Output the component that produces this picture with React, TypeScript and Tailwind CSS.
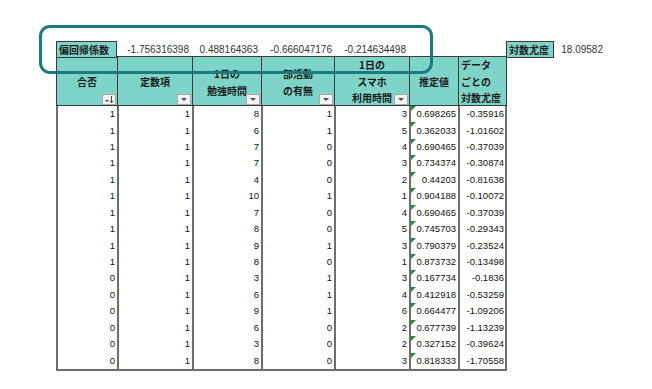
import React from "react";

const rows: [number, number, number, number, number, string, string][] = [
  [1, 1, 8, 1, 3, "0.698265", "-0.35916"],
  [1, 1, 6, 1, 5, "0.362033", "-1.01602"],
  [1, 1, 7, 0, 4, "0.690465", "-0.37039"],
  [1, 1, 7, 0, 3, "0.734374", "-0.30874"],
  [1, 1, 4, 0, 2, "0.44203", "-0.81638"],
  [1, 1, 10, 1, 1, "0.904188", "-0.10072"],
  [1, 1, 7, 0, 4, "0.690465", "-0.37039"],
  [1, 1, 8, 0, 5, "0.745703", "-0.29343"],
  [1, 1, 9, 1, 3, "0.790379", "-0.23524"],
  [1, 1, 8, 0, 1, "0.873732", "-0.13498"],
  [0, 1, 3, 1, 3, "0.167734", "-0.1836"],
  [0, 1, 6, 1, 4, "0.412918", "-0.53259"],
  [0, 1, 9, 1, 6, "0.664477", "-1.09206"],
  [0, 1, 6, 0, 2, "0.677739", "-1.13239"],
  [0, 1, 3, 0, 2, "0.327152", "-0.39624"],
  [0, 1, 8, 0, 3, "0.818333", "-1.70558"],
];

const jp = { fontFamily: '"Noto Sans CJK JP", "Noto Sans", sans-serif' };
const num = { fontFamily: '"Liberation Sans", Arial, sans-serif' };

function FilterBtn({ sorted }: { sorted?: boolean }) {
  return (
    <div className="absolute right-[1px] bottom-[2px] w-[14px] h-[11px] border border-[#a8a8a8] bg-[#f3f3f3] flex items-center justify-center">
      {sorted ? (
        <svg width="10" height="9" viewBox="0 0 10 9">
          <path d="M1 5 L5 5 L3 7 Z" fill="#444" />
          <path d="M7.5 1 L7.5 7.5 M6 6 L7.5 7.8 L9 6" stroke="#444" strokeWidth="1" fill="none" />
        </svg>
      ) : (
        <div className="w-0 h-0 border-l-[3px] border-r-[3px] border-t-[3px] border-l-transparent border-r-transparent border-t-[#505050] mt-[1px]" />
      )}
    </div>
  );
}

export default function App() {
  const grid = "grid grid-cols-[61px_75px_69px_73px_75px_49px_48px]";
  return (
    <div className="relative w-[652px] h-[389px] bg-white overflow-hidden">
      <div className="pl-[56px] pt-[41px]">
        {/* top row */}
        <div className="grid grid-cols-[61px_75px_69px_73px_75px_49px_48px_48px_52px] h-[15px] text-[10px] text-[#333]" style={num}>
          <div className="border border-[#3a3a3a] bg-[#7fd4ca] flex items-center pl-[2px] font-bold text-[10px] text-[#1a1a1a]" style={jp}>
            偏回帰係数
          </div>
          <div className="flex items-center justify-end pr-[3px]">-1.756316398</div>
          <div className="flex items-center justify-end pr-[3px]">0.488164363</div>
          <div className="flex items-center justify-end pr-[2px]">-0.666047176</div>
          <div className="flex items-center justify-end pr-[3px]">-0.214634498</div>
          <div />
          <div />
          <div className="border border-[#3a3a3a] bg-[#7fd4ca] flex items-center pl-[2px] font-bold text-[10px] text-[#1a1a1a]" style={jp}>
            対数尤度
          </div>
          <div className="flex items-center justify-end pr-[3px]">18.09582</div>
        </div>
        {/* header */}
        <div className={`${grid} h-[50px] w-[451px] bg-[#7fd4ca] border-t border-b border-r border-[#3a3a3a] font-bold text-[10px] text-[#1a1a1a] leading-[17px]`} style={jp}>
          <div className="relative border-l border-[#3a3a3a] flex flex-col items-center justify-center">
            <span>合否</span>
            <FilterBtn sorted />
          </div>
          <div className="relative border-l border-[#3a3a3a] flex flex-col items-center justify-center">
            <span>定数項</span>
            <FilterBtn />
          </div>
          <div className="relative border-l border-[#3a3a3a] flex flex-col items-center justify-center">
            <span>1日の</span>
            <span>勉強時間</span>
            <FilterBtn />
          </div>
          <div className="relative border-l border-[#3a3a3a] flex flex-col items-center justify-center">
            <span>部活動</span>
            <span>の有無</span>
            <FilterBtn />
          </div>
          <div className="relative border-l border-[#3a3a3a] flex flex-col items-center justify-center leading-[16.5px]">
            <span>1日の</span>
            <span>スマホ</span>
            <span>利用時間</span>
            <FilterBtn />
          </div>
          <div className="relative border-l border-[#3a3a3a] flex flex-col items-center justify-center">
            <span>推定値</span>
          </div>
          <div className="relative border-l border-[#3a3a3a] flex flex-col items-start justify-center pl-[2px] leading-[16.5px]">
            <span>データ</span>
            <span>ごとの</span>
            <span>対数尤度</span>
          </div>
        </div>
        {/* body */}
        <div className="flex flex-col h-[265px] w-[451px] border-b-2 border-r-2 border-[#6e6e6e] text-[9.5px] text-[#111]" style={num}>
          {rows.map((r, i) => (
            <div key={i} className={`${grid} flex-1`}>
              {r.map((v, j) => (
                <div
                  key={j}
                  className="relative border-l-2 border-[#6e6e6e] flex items-center justify-end pr-[2px]"
                >
                  {j === 5 && (
                    <div className="absolute left-0 top-0 w-0 h-0 border-t-[5px] border-t-[#1f8a3b] border-r-[5px] border-r-transparent" />
                  )}
                  {v}
                </div>
              ))}
            </div>
          ))}
        </div>
      </div>
      {/* highlight frame */}
      <div className="absolute left-[39px] top-[25px] w-[394px] h-[49px] border-[3px] border-[#1a7a7d] rounded-[11px]" />
    </div>
  );
}
